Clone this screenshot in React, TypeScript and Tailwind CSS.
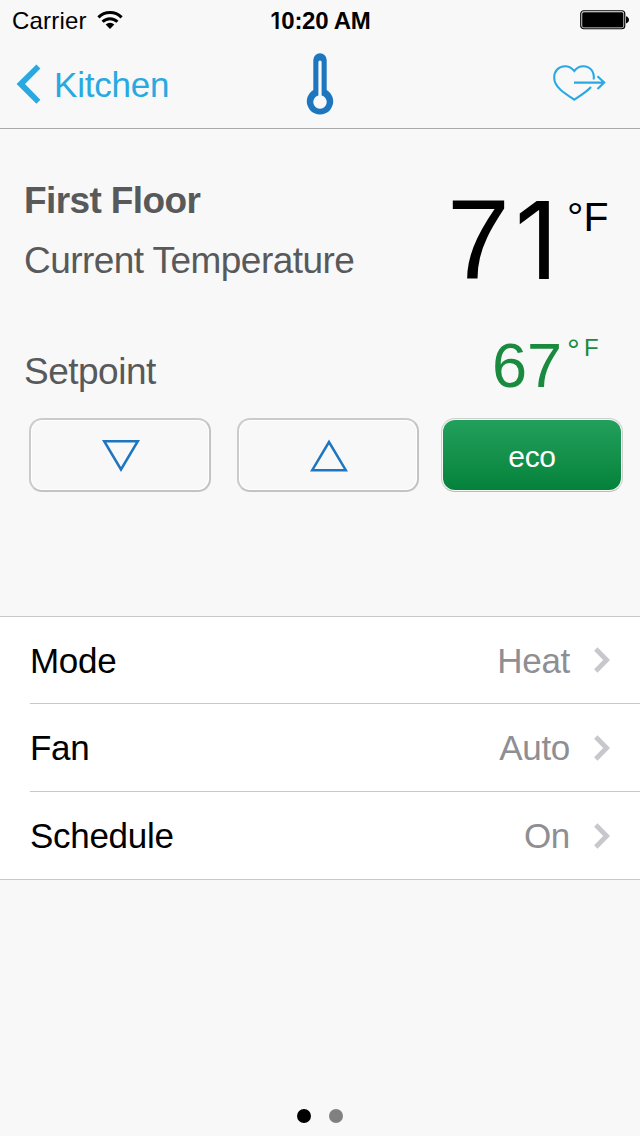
import type { ReactNode } from 'react';

const rows = [
  { label: 'Mode', value: 'Heat' },
  { label: 'Fan', value: 'Auto' },
  { label: 'Schedule', value: 'On' },
];

function StatusBar() {
  return (
    <div className="grid h-10 grid-cols-[1fr_auto_1fr] items-center pl-3 pr-[11px] text-2xl leading-[42px] text-black">
      <div className="flex items-center">
        <span className="h-10 tracking-[0.2px]">Carrier</span>
        <svg className="ml-[10px]" width="26" height="20" viewBox="0 0 26 20">
          <g fill="none" stroke="#000" strokeWidth="3">
            <path d="M1.4 7.4a16.4 16.4 0 0 1 23.2 0" />
            <path d="M5.6 11.8a10.4 10.4 0 0 1 14.8 0" />
          </g>
          <path d="M13 18.9l-4.3-4.4a6 6 0 0 1 8.6 0z" />
        </svg>
      </div>
      <span className="h-10 font-bold tracking-[-0.3px]">
        <span className="font-['Inter'] text-[23px] font-semibold tracking-[1px]">1</span>0:20 AM
      </span>
      <svg className="justify-self-end" width="49" height="20" viewBox="0 0 49 20">
        <rect x="0.75" y="0.75" width="44" height="18" rx="3" fill="none" stroke="#000" strokeWidth="1.2" />
        <rect x="2.2" y="2.2" width="41.2" height="15.2" rx="1.5" />
        <path d="M46 6.2c4 1 4 6.2 0 7.2z" />
      </svg>
    </div>
  );
}

function NavBar() {
  return (
    <div className="grid h-[89px] grid-cols-[1fr_auto_1fr] border-b border-[#a9a9a9] text-[#29a9e1]">
      <button className="flex items-start pl-4 text-[35px] leading-[40px]">
        <svg className="mt-6" width="25" height="40" viewBox="0 0 25 40">
          <path d="M20.4.5l4 4L9 20l15.400 15.800-4 4L.6 20z" fill="currentColor" />
        </svg>
        <span className="ml-[13px] mt-[25px] tracking-[-0.2px]">Kitchen</span>
      </button>
      <svg className="mt-[13px]" width="28" height="63" viewBox="0 0 28 63">
        <path
          fill="#1e76bf"
          fillRule="evenodd"
          d="M7.300 37V7a6.700 6.700 0 0 1 13.400 0v30a13.200 13.200 0 1 1-13.400 0zM12.400 9v33.500a6.700 6.700 0 1 0 3.200 0V9a1.600 1.600 0 0 0-3.200 0z"
        />
      </svg>
      <svg className="mr-[34px] mt-6 justify-self-end" width="54" height="38" viewBox="0 0 54 38">
        <g fill="none" stroke="currentColor" strokeWidth="2.100">
          <path d="M41.700 15.500C42.700 7 37.500 2.200 31.500 2.200c-4.500 0-7.200 2-9.300 4.800C20 4 17 2.200 13 2.200 6.500 2.200 2.200 7 2.200 13.500c0 5.500 2.700 9 6.300 12.200 4.500 3.800 9 6.800 13.700 10 5.500-3.700 12.800-8 16.800-12.700" />
          <path d="M22 18.600h30M45.500 12.300l6.700 6.300-6.700 6.400" />
        </g>
      </svg>
    </div>
  );
}

function SetpointButton({ children, label }: { children: ReactNode; label: string }) {
  return (
    <button
      aria-label={label}
      className="flex h-[74px] w-[182px] items-center justify-center rounded-[13px] border-2 border-[#cbcbcb] border-b-[#c3c3c3] border-r-[#c3c3c3] shadow-[inset_0_0_0_1px_#fff]"
    >
      {children}
    </button>
  );
}

function Chevron() {
  return (
    <svg className="mb-[2px] ml-6" width="17" height="26" viewBox="0 0 17 26">
      <path d="M1.800 2L12.600 13 1.800 24" fill="none" stroke="#c7c7cc" strokeWidth="4.800" />
    </svg>
  );
}

export default function App() {
  return (
    <div className="flex h-[1136px] w-[640px] flex-col bg-[#f8f8f8] font-['Liberation_Sans',Arial,sans-serif]">
      <StatusBar />
      <NavBar />

      <section className="h-[487px] text-[#58595b]">
        <div className="flex h-[190px] justify-between pl-6">
          <div className="pt-[51px] text-[37px] leading-[42px]">
            <h1 className="font-bold tracking-[-0.6px]">First Floor</h1>
            <p className="mt-[18px] tracking-[-0.55px]">Current Temperature</p>
          </div>
          <div className="flex w-[193px] items-start text-black">
            <span className="mt-[48px] w-[120px] whitespace-nowrap text-[113px] leading-[126px] tracking-[5px]">
              7<span className="font-['Inter'] text-[107px]">1</span>
            </span>
            <span className="mt-[65px] text-[41px] leading-[46px]">°F</span>
          </div>
        </div>
        <div className="flex h-[99px] justify-between pl-6">
          <p className="mt-[32px] text-[37px] leading-[42px] tracking-[-0.5px]">Setpoint</p>
          <div className="flex w-[149px] items-start text-[#1a8a3f]">
            <span className="mt-[11px] w-[76px] pl-px text-[63px] leading-[70px]">67</span>
            <span className="mt-[14px] flex text-2xl leading-[30px]">
              <span className="mt-[2px] w-[17px] text-[32px]">°</span>F
            </span>
          </div>
        </div>
        <div className="flex pl-[29px]">
          <SetpointButton label="Lower setpoint">
            <svg className="ml-[2px]" width="40" height="34" viewBox="0 0 40 34">
              <path d="M3.200 3.200h33.600L20 31.500z" fill="none" stroke="#1e76bf" strokeWidth="2.500" />
            </svg>
          </SetpointButton>
          <div className="ml-[26px]">
            <SetpointButton label="Raise setpoint">
              <svg className="ml-[2px]" width="40" height="34" viewBox="0 0 40 34">
                <path d="M3.200 32.200h33.600L20 4z" fill="none" stroke="#1e76bf" strokeWidth="2.500" />
              </svg>
            </SetpointButton>
          </div>
          <button className="ml-[22px] h-[74px] w-[182px] rounded-[14px] border border-[#cfcfcf] border-b-[#bbb] p-px text-white">
            <span className="flex h-full items-center justify-center rounded-xl bg-linear-to-b from-[#21a05c] to-[#04823b] pt-[2px] text-[30px] tracking-[-0.3px]">
              eco
            </span>
          </button>
        </div>
      </section>

      <ul className="border-y border-[#c8c7cc] bg-white pl-[30px] text-[35px] tracking-[-0.3px]">
        {rows.map((r, i) => (
          <li
            key={r.label}
            className={`flex items-center pr-[29px] pt-[2px] ${i > 0 ? 'h-[88px] border-t border-[#c8c7cc]' : 'h-[86px]'}`}
          >
            <span className="text-black">{r.label}</span>
            <span className="ml-auto text-[#8e8e93]">{r.value}</span>
            <Chevron />
          </li>
        ))}
      </ul>

      <div className="mt-auto flex justify-center gap-[18px] pb-[13px]">
        <span className="size-[14px] rounded-full bg-black" />
        <span className="size-[14px] rounded-full bg-[#808080]" />
      </div>
    </div>
  );
}
